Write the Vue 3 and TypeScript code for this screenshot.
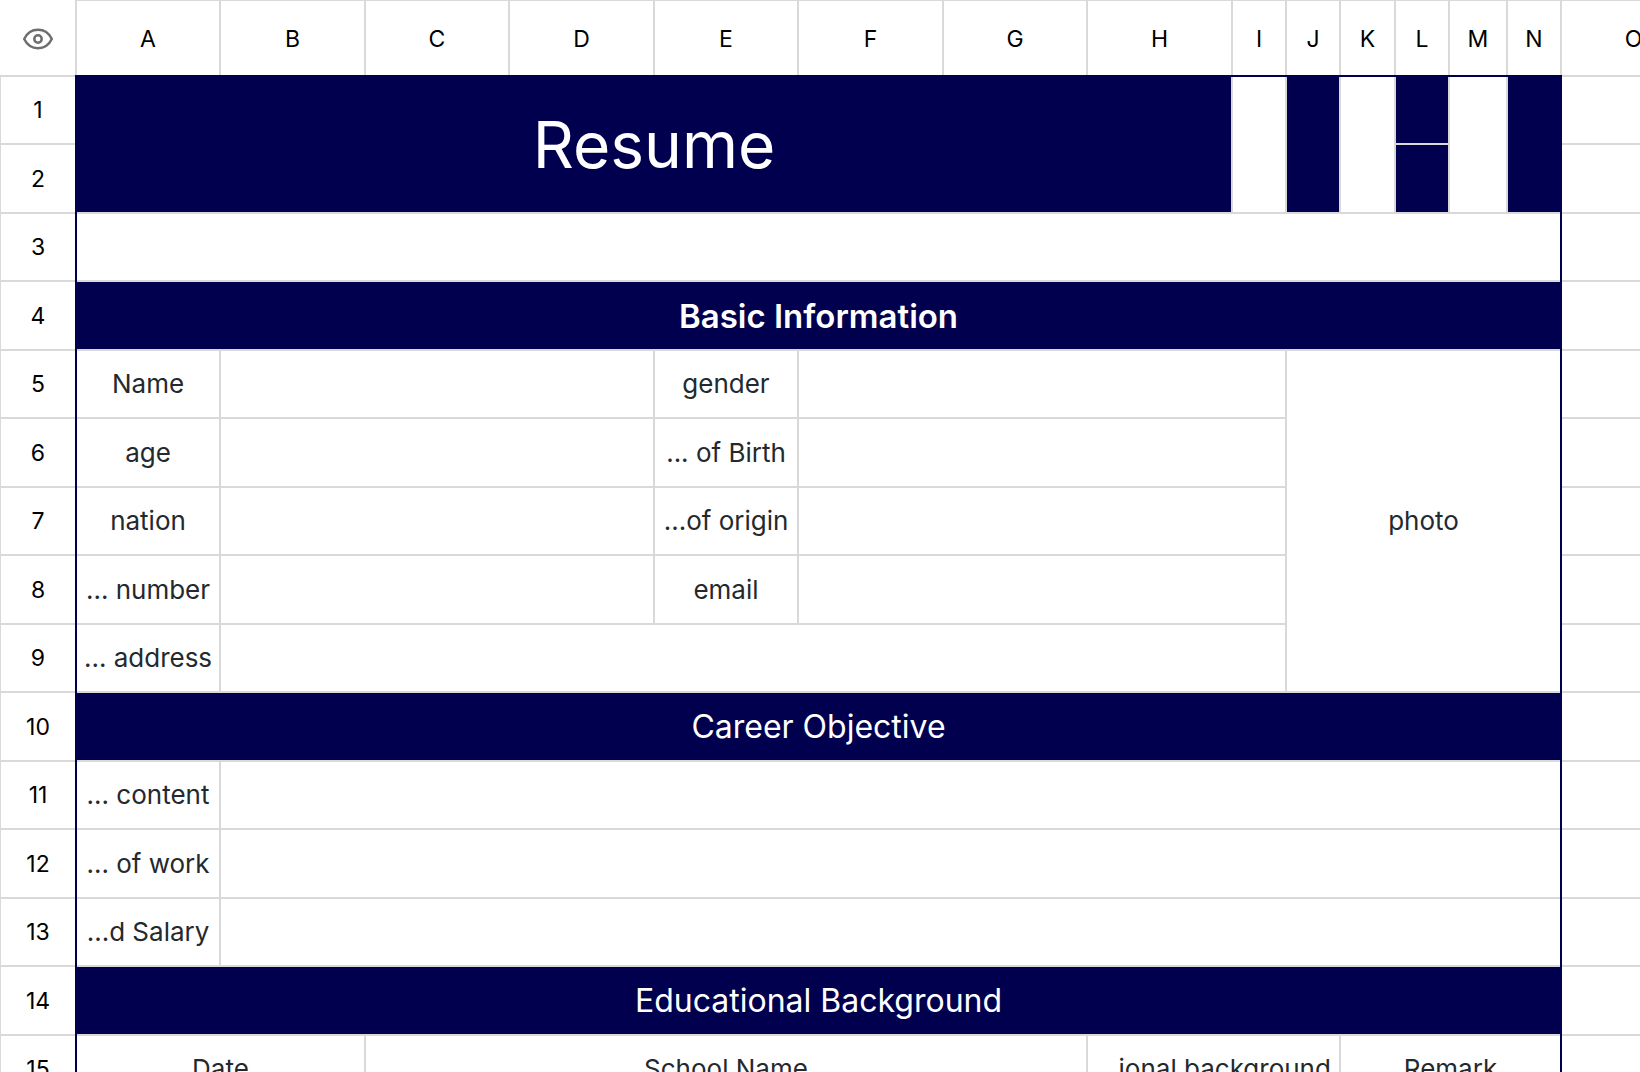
<script setup lang="ts">
interface Column {
  name: string
  width: number
}

interface Cell {
  text?: string
  cols?: number
  rows?: number
  kind?: string
}

const columns: Column[] = [
  { name: 'A', width: 146 },
  { name: 'B', width: 145 },
  { name: 'C', width: 144 },
  { name: 'D', width: 145 },
  { name: 'E', width: 144 },
  { name: 'F', width: 145 },
  { name: 'G', width: 144 },
  { name: 'H', width: 145 },
  { name: 'I', width: 54 },
  { name: 'J', width: 54 },
  { name: 'K', width: 55 },
  { name: 'L', width: 54 },
  { name: 'M', width: 58 },
  { name: 'N', width: 54 },
  { name: 'O', width: 145 },
]

// Columns A to N form the framed resume sheet; O lies outside it.
const framed = (name: string): boolean => name <= 'N'

const rows: Cell[][] = [
  [
    { text: 'Resume', cols: 8, rows: 2, kind: 'navy title' },
    { rows: 2 },
    { rows: 2, kind: 'navy' },
    { rows: 2 },
    { kind: 'navy' },
    { rows: 2 },
    { rows: 2, kind: 'navy' },
    {},
  ],
  [{ kind: 'navy' }, {}],
  [{ cols: 14 }, {}],
  [{ text: 'Basic Information', cols: 14, kind: 'navy section strong' }, {}],
  [
    { text: 'Name' },
    { cols: 3 },
    { text: 'gender' },
    { cols: 4 },
    { text: 'photo', cols: 5, rows: 5 },
    {},
  ],
  [{ text: 'age' }, { cols: 3 }, { text: '... of Birth' }, { cols: 4 }, {}],
  [{ text: 'nation' }, { cols: 3 }, { text: '...of origin' }, { cols: 4 }, {}],
  [{ text: '... number' }, { cols: 3 }, { text: 'email' }, { cols: 4 }, {}],
  [{ text: '... address' }, { cols: 8 }, {}],
  [{ text: 'Career Objective', cols: 14, kind: 'navy section' }, {}],
  [{ text: '... content' }, { cols: 13 }, {}],
  [{ text: '... of work' }, { cols: 13 }, {}],
  [{ text: '...d Salary' }, { cols: 13 }, {}],
  [{ text: 'Educational Background', cols: 14, kind: 'navy section' }, {}],
  [
    { text: 'Date', cols: 2 },
    { text: 'School Name', cols: 5 },
    { text: '...ional background', cols: 3 },
    { text: 'Remark', cols: 4 },
    {},
  ],
]
</script>

<template>
  <main class="viewport">
    <table class="sheet">
      <colgroup>
        <col class="gutter" />
        <col v-for="c in columns" :key="c.name" :style="{ width: c.width + 'px' }" />
      </colgroup>
      <thead>
        <tr>
          <td class="corner">
            <button type="button" class="eye" aria-label="Toggle visibility">
              <svg width="32" height="24" viewBox="0 0 32 24" fill="none" stroke="#6e6e6e" stroke-width="2.5">
                <path
                  d="M2.2 12C5 6.2 10 2.8 16 2.8S27 6.2 29.8 12C27 17.8 22 21.2 16 21.2S5 17.8 2.2 12Z"
                  stroke-linejoin="round"
                />
                <circle cx="16" cy="12" r="3.7" />
              </svg>
            </button>
          </td>
          <th v-for="c in columns" :key="c.name" scope="col" :class="{ framed: framed(c.name) }">
            {{ c.name }}
          </th>
        </tr>
      </thead>
      <tbody>
        <tr v-for="(row, r) in rows" :key="r">
          <th scope="row">{{ r + 1 }}</th>
          <td
            v-for="(cell, i) in row"
            :key="i"
            :colspan="cell.cols"
            :rowspan="cell.rows"
            :class="cell.kind"
          >
            {{ cell.text }}
          </td>
        </tr>
      </tbody>
    </table>
  </main>
</template>

<style>
body {
  margin: 0;
  background: #fff;
}
</style>

<style scoped>
.viewport {
  width: 100%;
  height: 100vh;
  overflow: hidden;
}

.sheet {
  width: 0;
  table-layout: fixed;
  border-collapse: separate;
  border-spacing: 0;
  font-family: Inter, 'Liberation Sans', sans-serif;
  color: #24292e;
}

.gutter {
  width: 75px;
}

th,
td {
  box-sizing: border-box;
  padding: 0;
  border: 0 solid #d9d9d9;
  border-right-width: 2px;
  border-bottom-width: 2px;
  text-align: center;
  vertical-align: middle;
  white-space: nowrap;
}

td {
  font-size: 26px;
  line-height: 32px;
}

th {
  font-size: 23px;
  line-height: 28px;
  font-weight: 400;
  color: #000;
}

thead tr {
  height: 75px;
}

tbody tr {
  height: 69px;
}

tbody tr:nth-child(odd) {
  height: 68px;
}

tbody tr:first-child {
  height: 70px;
}

/* The frame lines are shadows, so that they run unbroken over cell borders. */
thead th,
.corner {
  position: relative;
  padding-top: 2px;
  border-bottom-width: 0;
  box-shadow: 0 2px #d9d9d9;
}

thead th {
  border-top-width: 1px;
}

thead th.framed {
  box-shadow: 0 2px #00004f;
}

.corner {
  border-right-width: 0;
  box-shadow: 0 2px #d9d9d9, 2px 0 #d9d9d9;
}

tbody th {
  position: relative;
  border-left-width: 1px;
  border-right-width: 0;
  box-shadow: 2px 0 #00004f;
}

tbody td:last-child {
  position: relative;
  box-shadow: -2px 0 #00004f;
}

th + td,
.corner + th {
  padding-left: 2px;
}

tbody tr:first-child > * {
  padding-top: 2px;
}

.navy {
  background: #00004f;
  background-clip: padding-box;
  color: #fff;
}

.title {
  font-size: 64px;
  line-height: 80px;
}

.section {
  font-size: 32px;
  line-height: 40px;
}

.strong {
  font-size: 33px;
  font-weight: 600;
}

.eye {
  display: flex;
  margin: 0 auto;
  padding: 0;
  border: 0;
  background: none;
}
</style>
